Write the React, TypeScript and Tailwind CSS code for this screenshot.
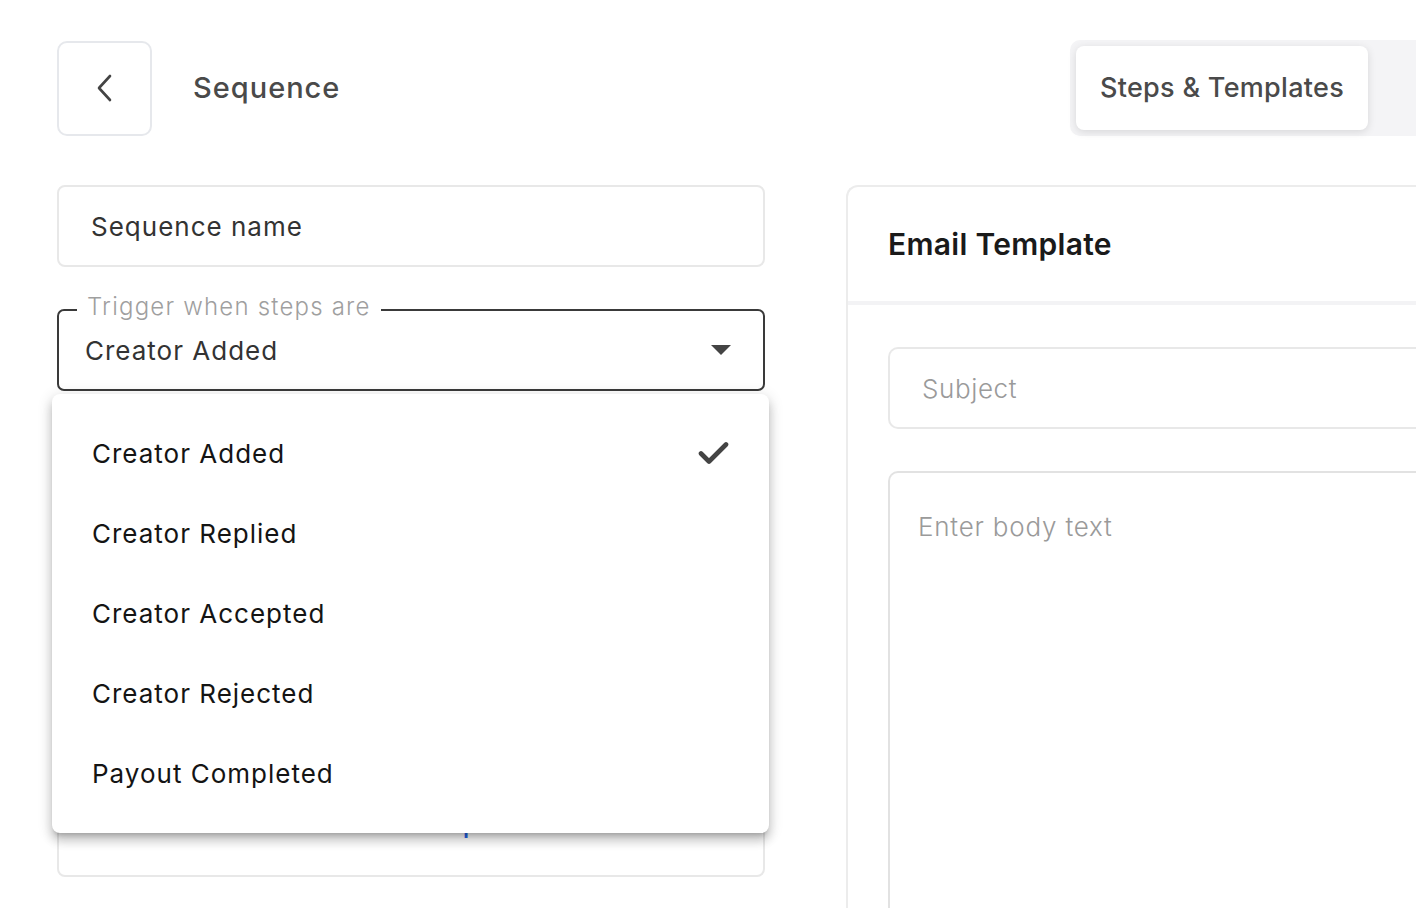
import React from 'react';

const options = ['Creator Added', 'Creator Replied', 'Creator Accepted', 'Creator Rejected', 'Payout Completed'];

const BackIcon = () => (
  <svg width="16" height="28" viewBox="0 0 16 28" fill="none">
    <path d="M13 2 2 14l11 12" stroke="#444" strokeWidth="2.6" strokeLinecap="round" strokeLinejoin="round" />
  </svg>
);

const CheckIcon = () => (
  <svg width="31" height="24" viewBox="0 0 31 24" fill="none">
    <path d="M3 12.5l8 8L28 3.5" stroke="#444" strokeWidth="4.6" strokeLinecap="round" strokeLinejoin="round" />
  </svg>
);

export default function App() {
  const selected = 'Creator Added';

  return (
    <div className="h-[908px] w-[1416px] overflow-hidden bg-white font-['Inter',sans-serif] text-[#333]">
      {/* header */}
      <div className="flex items-center justify-between pt-[40px]">
        <div className="flex items-center pl-[57px]">
          <button className="flex h-[95px] w-[95px] items-center justify-center rounded-[10px] border-2 border-[#e6e8ec] bg-white">
            <BackIcon />
          </button>
          <h1 className="ml-[41px] text-[29px] font-medium tracking-[1px] text-[#4a4a4a]">Sequence</h1>
        </div>
        <div className="flex rounded-l-[10px] bg-[#f4f4f6] py-[6px] pl-[6px] pr-[48px]">
          <div className="flex h-[84px] w-[292px] items-center justify-center rounded-[8px] bg-white text-[27px] font-medium tracking-[0.3px] text-[#4a4a4a] shadow-[0_2px_8px_rgba(0,0,0,0.12)]">
            Steps &amp; Templates
          </div>
        </div>
      </div>

      <div className="mt-[49px] flex">
        {/* left column */}
        <div className="relative ml-[57px] w-[708px] shrink-0">
          <div className="flex h-[82px] items-center rounded-[8px] border-2 border-[#e8e8e8] px-[32px] text-[26px] tracking-[1px] text-[#333]">
            Sequence name
          </div>

          <div className="relative mt-[42px] flex h-[82px] items-center justify-between rounded-[7px] border-2 border-[#3a3a3a] pl-[26px] pr-[32px]">
            <span className="absolute -top-[20px] left-[18px] bg-white px-[10px] text-[24px] font-light leading-[32px] tracking-[1.2px] text-[#9f9f9f]">
              Trigger when steps are
            </span>
            <span className="text-[26px] tracking-[1px] text-[#333]">Creator Added</span>
            <svg width="20" height="10" viewBox="0 0 20 10">
              <path d="M0 0h20L10 10z" fill="#444" />
            </svg>
          </div>

          <div className="mt-[42px] flex h-[444px] flex-col items-center justify-end rounded-[8px] border-2 border-[#e8e8e8] pb-[32px]">
            <span className="text-[26px] font-medium text-[#2563eb]">+ Add step</span>
          </div>

          {/* dropdown menu */}
          <div className="absolute left-[-5px] top-[209px] w-[717px] rounded-[8px] bg-white pb-[20px] pt-[19px] shadow-[0_5px_5px_-3px_rgba(0,0,0,0.2),0_8px_10px_1px_rgba(0,0,0,0.14),0_3px_14px_2px_rgba(0,0,0,0.12)]">
            {options.map(opt => (
              <div key={opt} className="flex h-[80px] items-center justify-between pl-[40px] pr-[40px] text-[26px] tracking-[1px] text-[#141414]">
                <span>{opt}</span>
                {opt === selected && <CheckIcon />}
              </div>
            ))}
          </div>
        </div>

        {/* right column */}
        <div className="ml-[81px] h-[760px] flex-1 rounded-tl-[12px] border-l-2 border-t-2 border-[#ececec]">
          <div className="flex h-[114px] items-center pl-[40px] text-[30px] font-semibold tracking-[0.3px] text-[#1a1a1a]">
            Email Template
          </div>
          <div className="h-[4px] bg-[#f3f3f5]" />
          <div className="flex flex-col gap-[42px] pl-[40px] pt-[42px]">
            <div className="flex h-[82px] items-center rounded-l-[10px] border-y-2 border-l-2 border-[#e8e8e8] pl-[32px] text-[26px] font-light tracking-[0.6px] text-[#9a9a9a]">
              Subject
            </div>
            <div className="h-[500px] rounded-tl-[10px] border-l-2 border-t-2 border-[#e2e2e2] pl-[28px] pt-[34px] text-[26px] font-light tracking-[0.8px] text-[#9a9a9a]">
              Enter body text
            </div>
          </div>
        </div>
      </div>
    </div>
  );
}
